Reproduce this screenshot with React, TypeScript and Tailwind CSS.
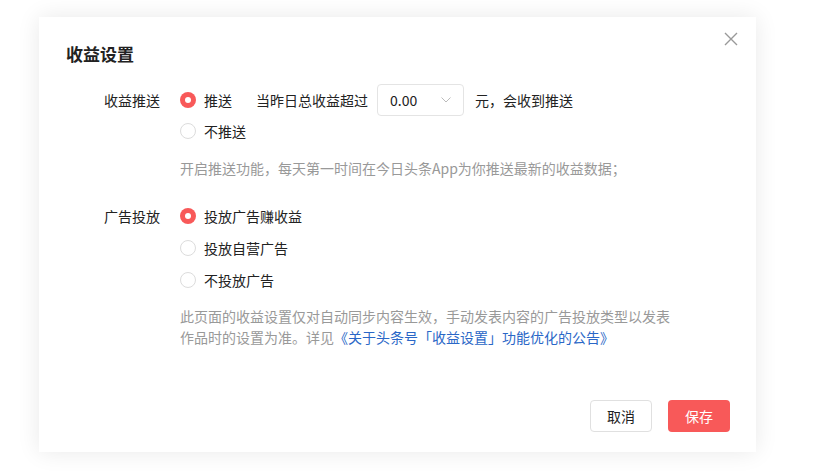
import React from "react";

function Radio({ checked, label }: { checked?: boolean; label: string }) {
  return (
    <div className="flex items-center h-8">
      {checked ? (
        <span className="w-4 h-4 rounded-full bg-[#f85959] flex items-center justify-center">
          <span className="w-[6px] h-[6px] rounded-full bg-white" />
        </span>
      ) : (
        <span className="w-4 h-4 rounded-full border border-[#dcdcdc] bg-white" />
      )}
      <span className="ml-2 text-[14px] text-[#222]">{label}</span>
    </div>
  );
}

export default function App() {
  return (
    <div
      className="w-[814px] h-[474px] bg-white relative"
      style={{ fontFamily: '"Noto Sans CJK SC", "Noto Sans", sans-serif' }}
    >
      <div className="absolute left-[39px] top-[17px] w-[717px] h-[435px] bg-white shadow-[0_0_22px_rgba(0,0,0,0.09)] flex flex-col pl-[27px] pr-[26px] pt-[25px] pb-[20px]">
        <button className="absolute right-[18px] top-[15px] w-[14px] h-[14px] flex items-center justify-center">
          <svg width="14" height="14" viewBox="0 0 14 14">
            <path d="M1 1 L13 13 M13 1 L1 13" stroke="#999" strokeWidth="1.4" fill="none" />
          </svg>
        </button>
        <div className="text-[17px] leading-6 font-semibold text-[#222] h-[24px]">收益设置</div>

        <div className="flex mt-[18px]">
          <div className="w-[94px] text-right text-[14px] text-[#222] leading-8 h-8">收益推送</div>
          <div className="ml-5 flex flex-col">
            <div className="flex items-center h-8">
              <Radio checked label="推送" />
              <span className="ml-6 text-[14px] text-[#222]">当昨日总收益超过</span>
              <div className="ml-[9px] w-[87px] h-8 border border-[#e4e4e4] rounded-[4px] flex items-center justify-between pl-3 pr-[12px]">
                <span className="text-[14px] text-[#222]">0.00</span>
                <svg width="10" height="6" viewBox="0 0 10 6">
                  <path d="M0.5 0.5 L5 5 L9.5 0.5" stroke="#bbb" strokeWidth="1" fill="none" />
                </svg>
              </div>
              <span className="ml-[11px] text-[14px] text-[#222]">元，会收到推送</span>
            </div>
            <div className="h-[30px] flex items-center">
              <Radio label="不推送" />
            </div>
            <div className="mt-3 text-[14px] leading-[21px] text-[#999]">
              开启推送功能，每天第一时间在今日头条App为你推送最新的收益数据；
            </div>
          </div>
        </div>

        <div className="flex mt-[21px]">
          <div className="w-[94px] text-right text-[14px] text-[#222] leading-8 h-8">广告投放</div>
          <div className="ml-5 flex flex-col">
            <Radio checked label="投放广告赚收益" />
            <Radio label="投放自营广告" />
            <Radio label="不投放广告" />
            <div className="mt-[10px] w-[530px] text-[14px] leading-[21px] text-[#999]">
              <div>此页面的收益设置仅对自动同步内容生效，手动发表内容的广告投放类型以发表</div>
              <div>
                作品时的设置为准。详见
                <span className="text-[#2a67c7]">《关于头条号「收益设置」功能优化的公告》</span>
              </div>
            </div>
          </div>
        </div>

        <div className="mt-auto flex justify-end gap-4">
          <button className="w-[62px] h-8 rounded-[4px] border border-[#e0e0e0] bg-white text-[14px] text-[#222]">
            取消
          </button>
          <button className="w-[62px] h-8 rounded-[4px] bg-[#f85959] text-[14px] text-white">
            保存
          </button>
        </div>
      </div>
    </div>
  );
}
